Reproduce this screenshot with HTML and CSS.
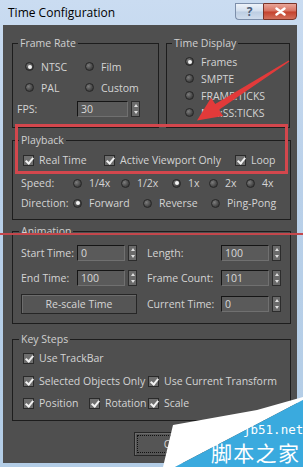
FILE: index.html
```html
<!DOCTYPE html>
<html lang="en">
<head>
<meta charset="utf-8">
<title>Time Configuration</title>
<link rel="stylesheet" href="styles.css">
</head>
<body>
<div class="window">
  <div class="titlebar">
    <span class="title">Time Configuration</span>
    <div class="caption-btns">
      <span class="cbtn help">?</span>
      <span class="cbtn close"><svg width="13" height="9" viewBox="0 0 13 9"><path d="M2.5 1.5 L10.5 7.5 M10.5 1.5 L2.5 7.5" stroke="#fff" stroke-width="2.4" stroke-linecap="round"/></svg></span>
    </div>
  </div>

  <div class="client">
    <div class="top-row">
      <fieldset class="group frame-rate">
        <legend>Frame Rate</legend>
        <div class="fr-body">
          <div class="row r21">
            <span class="opt w60"><i class="radio on"></i>NTSC</span>
            <span class="opt"><i class="radio"></i>Film</span>
          </div>
          <div class="row r21">
            <span class="opt w60"><i class="radio"></i>PAL</span>
            <span class="opt"><i class="radio"></i>Custom</span>
          </div>
          <div class="row r21 fps-row">
            <span class="lbl w60">FPS:</span>
            <span class="num w51">30</span>
            <span class="spin"><i class="up"></i><i class="down"></i></span>
          </div>
        </div>
      </fieldset>

      <fieldset class="group time-display">
        <legend>Time Display</legend>
        <div class="td-body">
          <div class="row r17"><span class="opt"><i class="radio on"></i>Frames</span></div>
          <div class="row r17"><span class="opt"><i class="radio"></i>SMPTE</span></div>
          <div class="row r17"><span class="opt"><i class="radio"></i>FRAME:TICKS</span></div>
          <div class="row r17"><span class="opt"><i class="radio"></i>MM:SS:TICKS</span></div>
        </div>
      </fieldset>
    </div>

    <fieldset class="group playback">
      <legend>Playback</legend>
      <div class="pb-body">
        <div class="row r20 checks">
          <span class="opt w81"><i class="check"></i>Real Time</span>
          <span class="opt w131"><i class="check"></i>Active Viewport Only</span>
          <span class="opt"><i class="check"></i>Loop</span>
        </div>
        <div class="row r20 speed">
          <span class="lbl w52">Speed:</span>
          <span class="opt w48"><i class="radio"></i>1/4x</span>
          <span class="opt w51"><i class="radio"></i>1/2x</span>
          <span class="opt w37"><i class="radio on"></i>1x</span>
          <span class="opt w37"><i class="radio"></i>2x</span>
          <span class="opt"><i class="radio"></i>4x</span>
        </div>
        <div class="row r20">
          <span class="lbl w52">Direction:</span>
          <span class="opt w70"><i class="radio on"></i>Forward</span>
          <span class="opt w68"><i class="radio"></i>Reverse</span>
          <span class="opt"><i class="radio"></i>Ping-Pong</span>
        </div>
      </div>
    </fieldset>

    <fieldset class="group animation">
      <legend>Animation</legend>
      <div class="an-body">
        <div class="row r21">
          <span class="lbl w56">Start Time:</span>
          <span class="num w48">0</span>
          <span class="spin"><i class="up"></i><i class="down"></i></span>
          <span class="lbl w74 col2">Length:</span>
          <span class="num w48">100</span>
          <span class="spin"><i class="up"></i><i class="down"></i></span>
        </div>
        <div class="row r21 an-row2">
          <span class="lbl w56">End Time:</span>
          <span class="num w48">100</span>
          <span class="spin"><i class="up"></i><i class="down"></i></span>
          <span class="lbl w74 col2">Frame Count:</span>
          <span class="num w48">101</span>
          <span class="spin"><i class="up"></i><i class="down"></i></span>
        </div>
        <div class="row r21 an-row3">
          <span class="btn rescale">Re-scale Time</span>
          <span class="lbl w74 col2">Current Time:</span>
          <span class="num w48">0</span>
          <span class="spin"><i class="up"></i><i class="down"></i></span>
        </div>
      </div>
    </fieldset>

    <fieldset class="group keysteps">
      <legend>Key Steps</legend>
      <div class="ks-body">
        <div class="row r20"><span class="opt"><i class="check"></i>Use TrackBar</span></div>
        <div class="row r20 ks-row2">
          <span class="opt w125"><i class="check"></i>Selected Objects Only</span>
          <span class="opt"><i class="check"></i>Use Current Transform</span>
        </div>
        <div class="row r20 ks-row3">
          <span class="opt w66"><i class="check"></i>Position</span>
          <span class="opt w59"><i class="check"></i>Rotation</span>
          <span class="opt"><i class="check"></i>Scale</span>
        </div>
      </div>
    </fieldset>

    <div class="ok-wrap"><span class="btn ok"><span class="focus">OK</span></span></div>
  </div>

  <svg class="overlay" width="303" height="467" viewBox="0 0 303 467">
    <rect x="16.5" y="125.5" width="270" height="47" fill="none" stroke="#d3474d" stroke-width="3"/>
    <rect x="0" y="233" width="303" height="2" fill="#c4474c"/>
    <polygon points="288.6,60.4 215.2,104 211.1,97.7 197,120.5 223.1,116.1 219,109.8 289.4,61.6" fill="#e23a3a"/>
    <polygon points="173,425 257,410 303,397 303,400 175,467 163,467" fill="#ffffff"/>
    <polygon points="303,400 303,467 175,467" fill="#3aaade"/>
  </svg>
  <span class="wm-url">jb51.net</span>
  <span class="wm-cn">脚本之家</span>
</div>
</body>
</html>
```

FILE: styles.css
```css
* { box-sizing: border-box; }

body {
  margin: 0;
  background: #bcd4ec;
  font-family: "Open Sans", "Noto Sans", sans-serif;
}

.window {
  position: relative;
  width: 303px;
  height: 467px;
  overflow: hidden;
  background: linear-gradient(#cadcf1, #b9d0e9 40%, #b3cde6);
}

/* ---------- title bar ---------- */
.titlebar {
  height: 25px;
  display: flex;
  align-items: flex-start;
}
.title {
  margin: 5px 0 0 8px;
  font-size: 12px;
  line-height: 16px;
  color: #000;
}
.caption-btns {
  margin: 3px 6px 0 auto;
  display: flex;
}
.cbtn {
  height: 17px;
  display: flex;
  align-items: center;
  justify-content: center;
}
.help {
  width: 28px;
  border: 1px solid #7d8faa;
  border-right: none;
  border-radius: 0 0 0 4px;
  background: linear-gradient(#eef3f9, #d3dfee 48%, #bccde2 52%, #cfdcec);
  color: #4c5d77;
  font-size: 12px;
  font-weight: bold;
  line-height: 15px;
}
.close {
  width: 34px;
  border: 1px solid #7a3328;
  border-radius: 0 0 4px 0;
  background: linear-gradient(#e9a598, #d6705f 48%, #c4412d 52%, #d2705c);
}

/* ---------- client area ---------- */
.client {
  margin: 0 6px 0 3px;
  height: 438px;
  background: #4f4f4f;
  padding: 11px 0 0 9px;
  color: #d4d4d4;
  font-size: 10.5px;
}

.top-row {
  display: flex;
  gap: 7px;
}

.group {
  margin: 0;
  padding: 0;
  border: 1px solid #1d1d1d;
  min-width: 0;
}
.group legend {
  margin-left: 6px;
  padding: 0 2px;
  font-size: 10.5px;
  line-height: 14px;
  color: #d0d0d0;
}

.frame-rate { width: 147px; height: 92px; }
.frame-rate legend { margin-left: 5px; }
.time-display { width: 124px; height: 92px; }
.time-display legend { margin-left: 5px; }
.playback { width: 279px; height: 87px; margin-top: 5px; }
.animation { width: 279px; height: 100px; margin-top: 4px; }
.keysteps { width: 279px; height: 89px; margin-top: 8px; }

.fr-body { padding: 6px 0 0 12px; }
.td-body { padding: 3px 0 0 18px; }
.pb-body { padding: 3px 0 0 8px; }
.an-body { padding: 4px 0 0 8px; }
.ks-body { padding: 2px 0 0 10px; }

.row {
  display: flex;
  align-items: center;
  white-space: nowrap;
}
.r17 { height: 17px; }
.r20 { height: 20px; }
.r21 { height: 21px; }

.fps-row { margin-left: -8px; }
.checks { margin-left: 2px; }
.speed { margin-top: 3px; }
.an-row2 { margin-top: 4px; }
.an-row3 { margin-top: 5px; }
.ks-row2 { margin-top: 3px; }
.ks-row3 { margin-top: 2px; }

.w37 { width: 37px; }
.w48 { width: 48px; }
.w51 { width: 51px; }
.w52 { width: 52px; }
.w56 { width: 56px; }
.w59 { width: 59px; }
.w60 { width: 60px; }
.w66 { width: 66px; }
.w68 { width: 68px; }
.w70 { width: 70px; }
.w74 { width: 74px; }
.w81 { width: 81px; }
.w125 { width: 125px; }
.w131 { width: 131px; }

.opt, .lbl {
  display: flex;
  align-items: center;
  flex: none;
  line-height: 14px;
}
.col2 { margin-left: 10px; }

/* radio */
.radio {
  width: 9px;
  height: 9px;
  margin-right: 7px;
  border-radius: 50%;
  border: 1px solid #262626;
  background: radial-gradient(circle at 35% 35%, #7c7c7c, #3e3e3e 70%);
  flex: none;
  position: relative;
}
.radio.on::after {
  content: "";
  position: absolute;
  left: 1.5px;
  top: 1.5px;
  width: 4px;
  height: 4px;
  border-radius: 50%;
  background: #f4f4f4;
}

/* checkbox */
.check {
  width: 11px;
  height: 11px;
  margin-right: 5px;
  border: 1px solid #2a2a2a;
  background: #6e6e6e;
  flex: none;
  position: relative;
}
.check::after {
  content: "";
  position: absolute;
  left: 3px;
  top: 0px;
  width: 3px;
  height: 6px;
  border: solid #f2f2f2;
  border-width: 0 2px 2px 0;
  transform: rotate(40deg);
}

/* numeric fields */
.num {
  height: 16px;
  flex: none;
  padding-left: 3px;
  border: 1px solid;
  border-color: #151515 #707070 #707070 #151515;
  background: #5a5a5a;
  color: #d8d8d8;
  line-height: 14px;
}
.spin {
  width: 9px;
  height: 16px;
  margin-left: 3px;
  flex: none;
  display: flex;
  flex-direction: column;
  justify-content: space-around;
  align-items: center;
  background: #6a6a6a;
  border: 1px solid #2c2c2c;
}
.spin .up, .spin .down {
  width: 0;
  height: 0;
  border-left: 2.5px solid transparent;
  border-right: 2.5px solid transparent;
}
.spin .up { border-bottom: 3px solid #e0e0e0; }
.spin .down { border-top: 3px solid #e0e0e0; }

/* buttons */
.btn {
  display: flex;
  align-items: center;
  justify-content: center;
  flex: none;
  background: #555;
  border: 1px solid #262626;
  box-shadow: inset 1px 1px 0 #6c6c6c;
  color: #d6d6d6;
}
.rescale {
  width: 116px;
  height: 20px;
  margin-top: 1px;
}

.ok-wrap {
  margin-top: 11px;
  padding-left: 122px;
}
.ok {
  width: 74px;
  height: 24px;
  padding: 2px;
}
.focus {
  width: 100%;
  height: 100%;
  border: 1px dotted #111;
  display: flex;
  align-items: center;
  justify-content: center;
}

/* ---------- overlays (annotation + watermark) ---------- */
.overlay {
  position: absolute;
  left: 0;
  top: 0;
  pointer-events: none;
}
.wm-url {
  position: absolute;
  left: 243px;
  top: 423px;
  font-family: "DejaVu Sans Mono", "Liberation Mono", monospace;
  font-size: 12.5px;
  line-height: 13px;
  color: #fff;
}
.wm-cn {
  position: absolute;
  left: 211px;
  top: 437px;
  font-family: "Noto Sans CJK SC", sans-serif;
  font-size: 21px;
  letter-spacing: 1.3px;
  line-height: normal;
  color: #fff;
}
```
